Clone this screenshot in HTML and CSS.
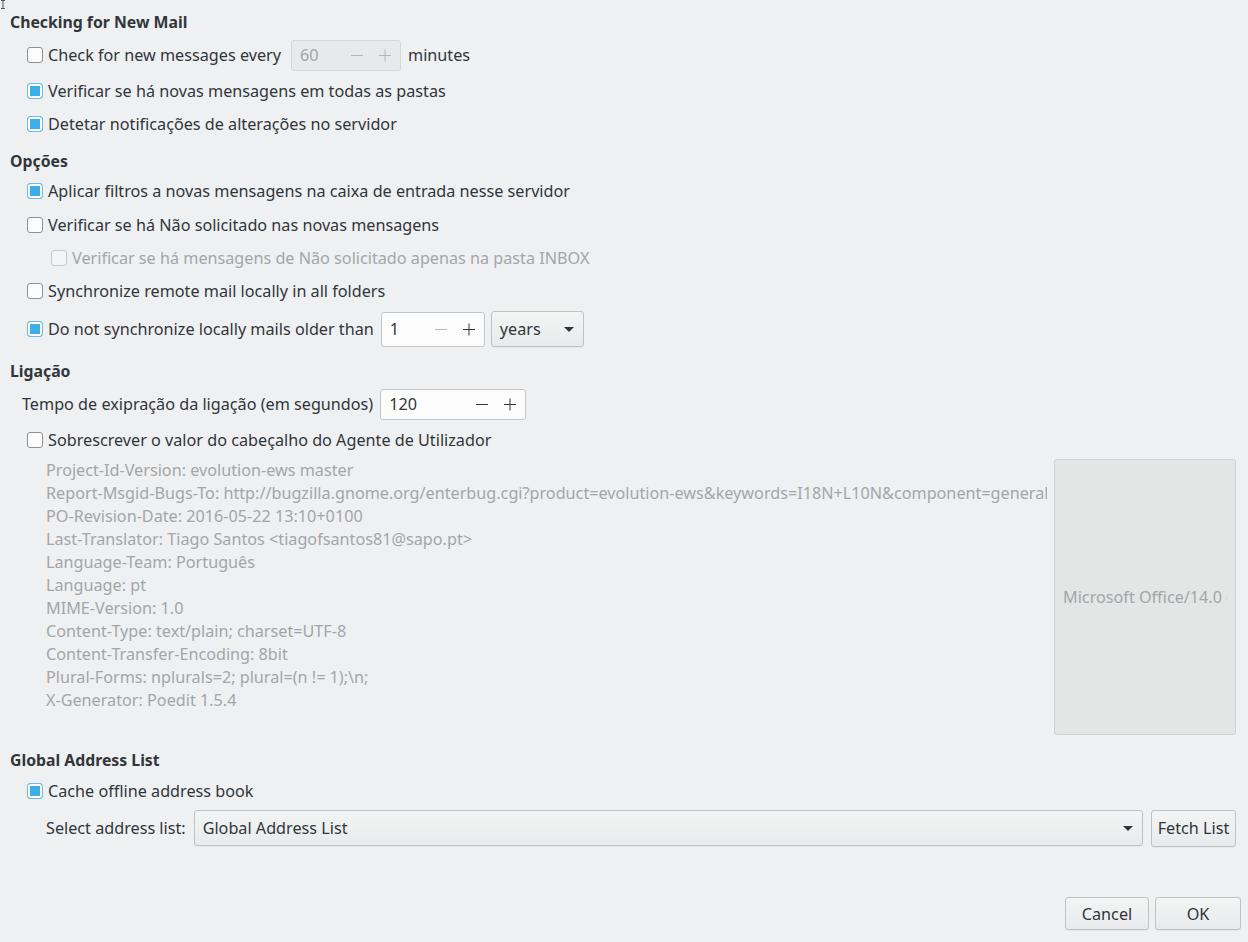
FILE: index.html
```html
<!DOCTYPE html>
<html lang="pt">
<head>
<meta charset="utf-8">
<title>EWS options</title>
<link rel="stylesheet" href="styles.css">
</head>
<body>
<svg class="cursor" width="7" height="9" viewBox="0 0 7 9"><path d="M1 0.5h4M3 0.5v8M1 8.5h4" stroke="#555" stroke-width="1" fill="none"/></svg>
<div class="page">
  <div class="h h-first">Checking for New Mail</div>
  <div class="row r-spin r1">
    <span class="cb"></span><span class="lbl">Check for new messages every</span>
    <span class="spin disabled w-60"><span class="val">60</span><span class="btn minus"></span><span class="btn plus"></span></span>
    <span class="lbl after">minutes</span>
  </div>
  <div class="row r2"><span class="cb on"></span><span class="lbl">Verificar se há novas mensagens em todas as pastas</span></div>
  <div class="row r3"><span class="cb on"></span><span class="lbl">Detetar notificações de alterações no servidor</span></div>

  <div class="h h-2">Opções</div>
  <div class="row r4"><span class="cb on"></span><span class="lbl">Aplicar filtros a novas mensagens na caixa de entrada nesse servidor</span></div>
  <div class="row r5"><span class="cb"></span><span class="lbl">Verificar se há Não solicitado nas novas mensagens</span></div>
  <div class="row r3 sub"><span class="cb dis"></span><span class="lbl grey">Verificar se há mensagens de Não solicitado apenas na pasta INBOX</span></div>
  <div class="row r3"><span class="cb"></span><span class="lbl">Synchronize remote mail locally in all folders</span></div>
  <div class="row r-spin r6">
    <span class="cb on"></span><span class="lbl">Do not synchronize locally mails older than</span>
    <span class="spin tall w-1"><span class="val">1</span><span class="btn minus off"></span><span class="btn plus"></span></span>
    <span class="combo small"><span class="cval">years</span><span class="arrow"></span></span>
  </div>

  <div class="h h-3">Ligação</div>
  <div class="row r-tempo">
    <span class="lbl">Tempo de exipração da ligação (em segundos)</span>
    <span class="spin w-120"><span class="val">120</span><span class="btn minus"></span><span class="btn plus"></span></span>
  </div>
  <div class="row r7"><span class="cb"></span><span class="lbl">Sobrescrever o valor do cabeçalho do Agente de Utilizador</span></div>
  <div class="ua">
    <div class="ua-text">
      <div>Project-Id-Version: evolution-ews master</div>
      <div>Report-Msgid-Bugs-To: http://bugzilla.gnome.org/enterbug.cgi?product=evolution-ews&amp;keywords=I18N+L10N&amp;component=general</div>
      <div>PO-Revision-Date: 2016-05-22 13:10+0100</div>
      <div>Last-Translator: Tiago Santos &lt;tiagofsantos81@sapo.pt&gt;</div>
      <div>Language-Team: Português</div>
      <div>Language: pt</div>
      <div>MIME-Version: 1.0</div>
      <div>Content-Type: text/plain; charset=UTF-8</div>
      <div>Content-Transfer-Encoding: 8bit</div>
      <div>Plural-Forms: nplurals=2; plural=(n != 1);\n;</div>
      <div>X-Generator: Poedit 1.5.4</div>
    </div>
    <div class="ua-box"><span class="ua-val">Microsoft Office/14.0 (Windows NT 6.1; Microsoft Outlook 14.0)</span></div>
  </div>

  <div class="h h-4">Global Address List</div>
  <div class="row r8"><span class="cb on"></span><span class="lbl">Cache offline address book</span></div>
  <div class="row r-sel">
    <span class="lbl">Select address list:</span>
    <span class="combo wide"><span class="cval">Global Address List</span><span class="arrow"></span></span>
    <span class="button fetch">Fetch List</span>
  </div>
  <div class="actions">
    <span class="button act">Cancel</span>
    <span class="button act ok">OK</span>
  </div>
</div>
</body>
</html>
```

FILE: styles.css
```css
html, body {
  margin: 0;
  padding: 0;
  background: #eff0f1;
}
body {
  width: 1248px;
  height: 942px;
  overflow: hidden;
  font-family: "Noto Sans", "Open Sans", sans-serif;
  font-size: 16.2px;
  color: #31363b;
  position: relative;
}
.cursor {
  position: absolute;
  left: 0;
  top: 0;
}
.page {
  display: flex;
  flex-direction: column;
  padding: 0 12px 0 10px;
}
.h {
  font-weight: bold;
  font-size: 15.8px;
  height: 20px;
  line-height: 20px;
}
.h-first { margin-top: 12px; }
.h-2 { margin-top: 12px; }
.h-3 { margin-top: 14px; }
.h-4 { margin-top: 15px; }

.row {
  display: flex;
  align-items: center;
  height: 30px;
  padding-left: 17px;
  white-space: nowrap;
}
.r-spin { height: 36px; }
.r1 { margin-top: 5px; }
.r2 { margin-top: 3px; }
.r3 { margin-top: 3px; }
.r4 { margin-top: 5px; }
.r5 { margin-top: 4px; }
.r6 { margin-top: 5px; }
.r7 { margin-top: 5px; }
.r8 { margin-top: 6px; }
.sub { padding-left: 41px; }

.r-tempo {
  height: 32px;
  margin-top: 7px;
  padding-left: 12px;
}
.r-sel {
  height: 36px;
  margin-top: 4px;
  padding-left: 36px;
}

.cb {
  box-sizing: border-box;
  width: 16px;
  height: 16px;
  border: 1px solid #8f9193;
  border-radius: 3px;
  background: #fcfcfc;
  margin-right: 5px;
  flex: none;
}
.cb.on {
  border-color: #6fbde8;
  background: #3daee9;
  box-shadow: inset 0 0 0 2px #fcfcfc;
}
.cb.dis {
  border-color: #c6c8ca;
  background: #f4f5f5;
}
.lbl.grey { color: #a3a6a9; }
.lbl.after { margin-left: 7px; }

.spin {
  box-sizing: border-box;
  display: flex;
  align-items: center;
  height: 31px;
  margin-left: 10px;
  background: #fcfcfc;
  border: 1px solid #c3c5c7;
  border-radius: 3px;
  padding-left: 8px;
}
.spin.tall { height: 35px; margin-left: 7px; }
.spin.disabled {
  background: #e8e9ea;
  border-color: #d4d6d8;
  color: #a3a6a9;
}
.w-60 { width: 110px; }
.w-1 { width: 104px; }
.w-120 { width: 146px; margin-left: 7px; }
.val { flex: 1; }
.btn {
  width: 28px;
  height: 100%;
  position: relative;
  flex: none;
}
.btn.plus { margin-right: 1px; }
.btn::before, .btn.plus::after {
  content: "";
  position: absolute;
  left: 8px;
  top: 50%;
  width: 12px;
  height: 1px;
  background: #31363b;
}
.btn.plus::after {
  transform: rotate(90deg);
}
.btn.off::before,
.spin.disabled .btn::before,
.spin.disabled .btn.plus::after { background: #b4b7ba; }

.combo {
  box-sizing: border-box;
  display: flex;
  align-items: center;
  height: 36px;
  border: 1px solid #c0c2c4;
  border-radius: 3px;
  background: linear-gradient(#f3f4f4, #e9eaeb);
  box-shadow: 0 1px 0 rgba(0,0,0,0.04);
  padding: 0 8px;
}
.combo.small { width: 93px; margin-left: 6px; }
.combo.wide { flex: 1; margin-left: 8px; }
.cval { flex: 1; }
.arrow {
  width: 0;
  height: 0;
  border-left: 5px solid transparent;
  border-right: 5px solid transparent;
  border-top: 5px solid #31363b;
  margin-right: 1px;
}

.ua {
  display: flex;
  margin-top: 4px;
  height: 276px;
}
.ua-text {
  padding-left: 36px;
  line-height: 23px;
  color: #a3a6a9;
  white-space: nowrap;
  flex: 1;
  overflow: hidden;
}
.ua-box {
  box-sizing: border-box;
  width: 182px;
  height: 276px;
  margin-left: 7px;
  background: #e4e5e5;
  border: 1px solid #cfd1d2;
  border-radius: 3px;
  color: #a3a6a9;
  display: flex;
  align-items: center;
  padding-left: 8px;
  overflow: hidden;
  white-space: nowrap;
}
.ua-val {
  display: block;
  width: 164px;
  overflow: hidden;
  flex: none;
}

.button {
  box-sizing: border-box;
  display: flex;
  align-items: center;
  justify-content: center;
  border: 1px solid #c0c2c4;
  border-radius: 3px;
  background: linear-gradient(#f3f4f4, #e9eaeb);
  box-shadow: 0 1px 0 rgba(0,0,0,0.04);
}
.fetch {
  width: 85px;
  height: 37px;
  margin-left: 8px;
}
.actions {
  display: flex;
  justify-content: flex-end;
  margin-top: 51px;
  margin-right: -5px;
  gap: 6px;
}
.act {
  width: 84px;
  height: 33px;
}
.act.ok { width: 86px; }
```
